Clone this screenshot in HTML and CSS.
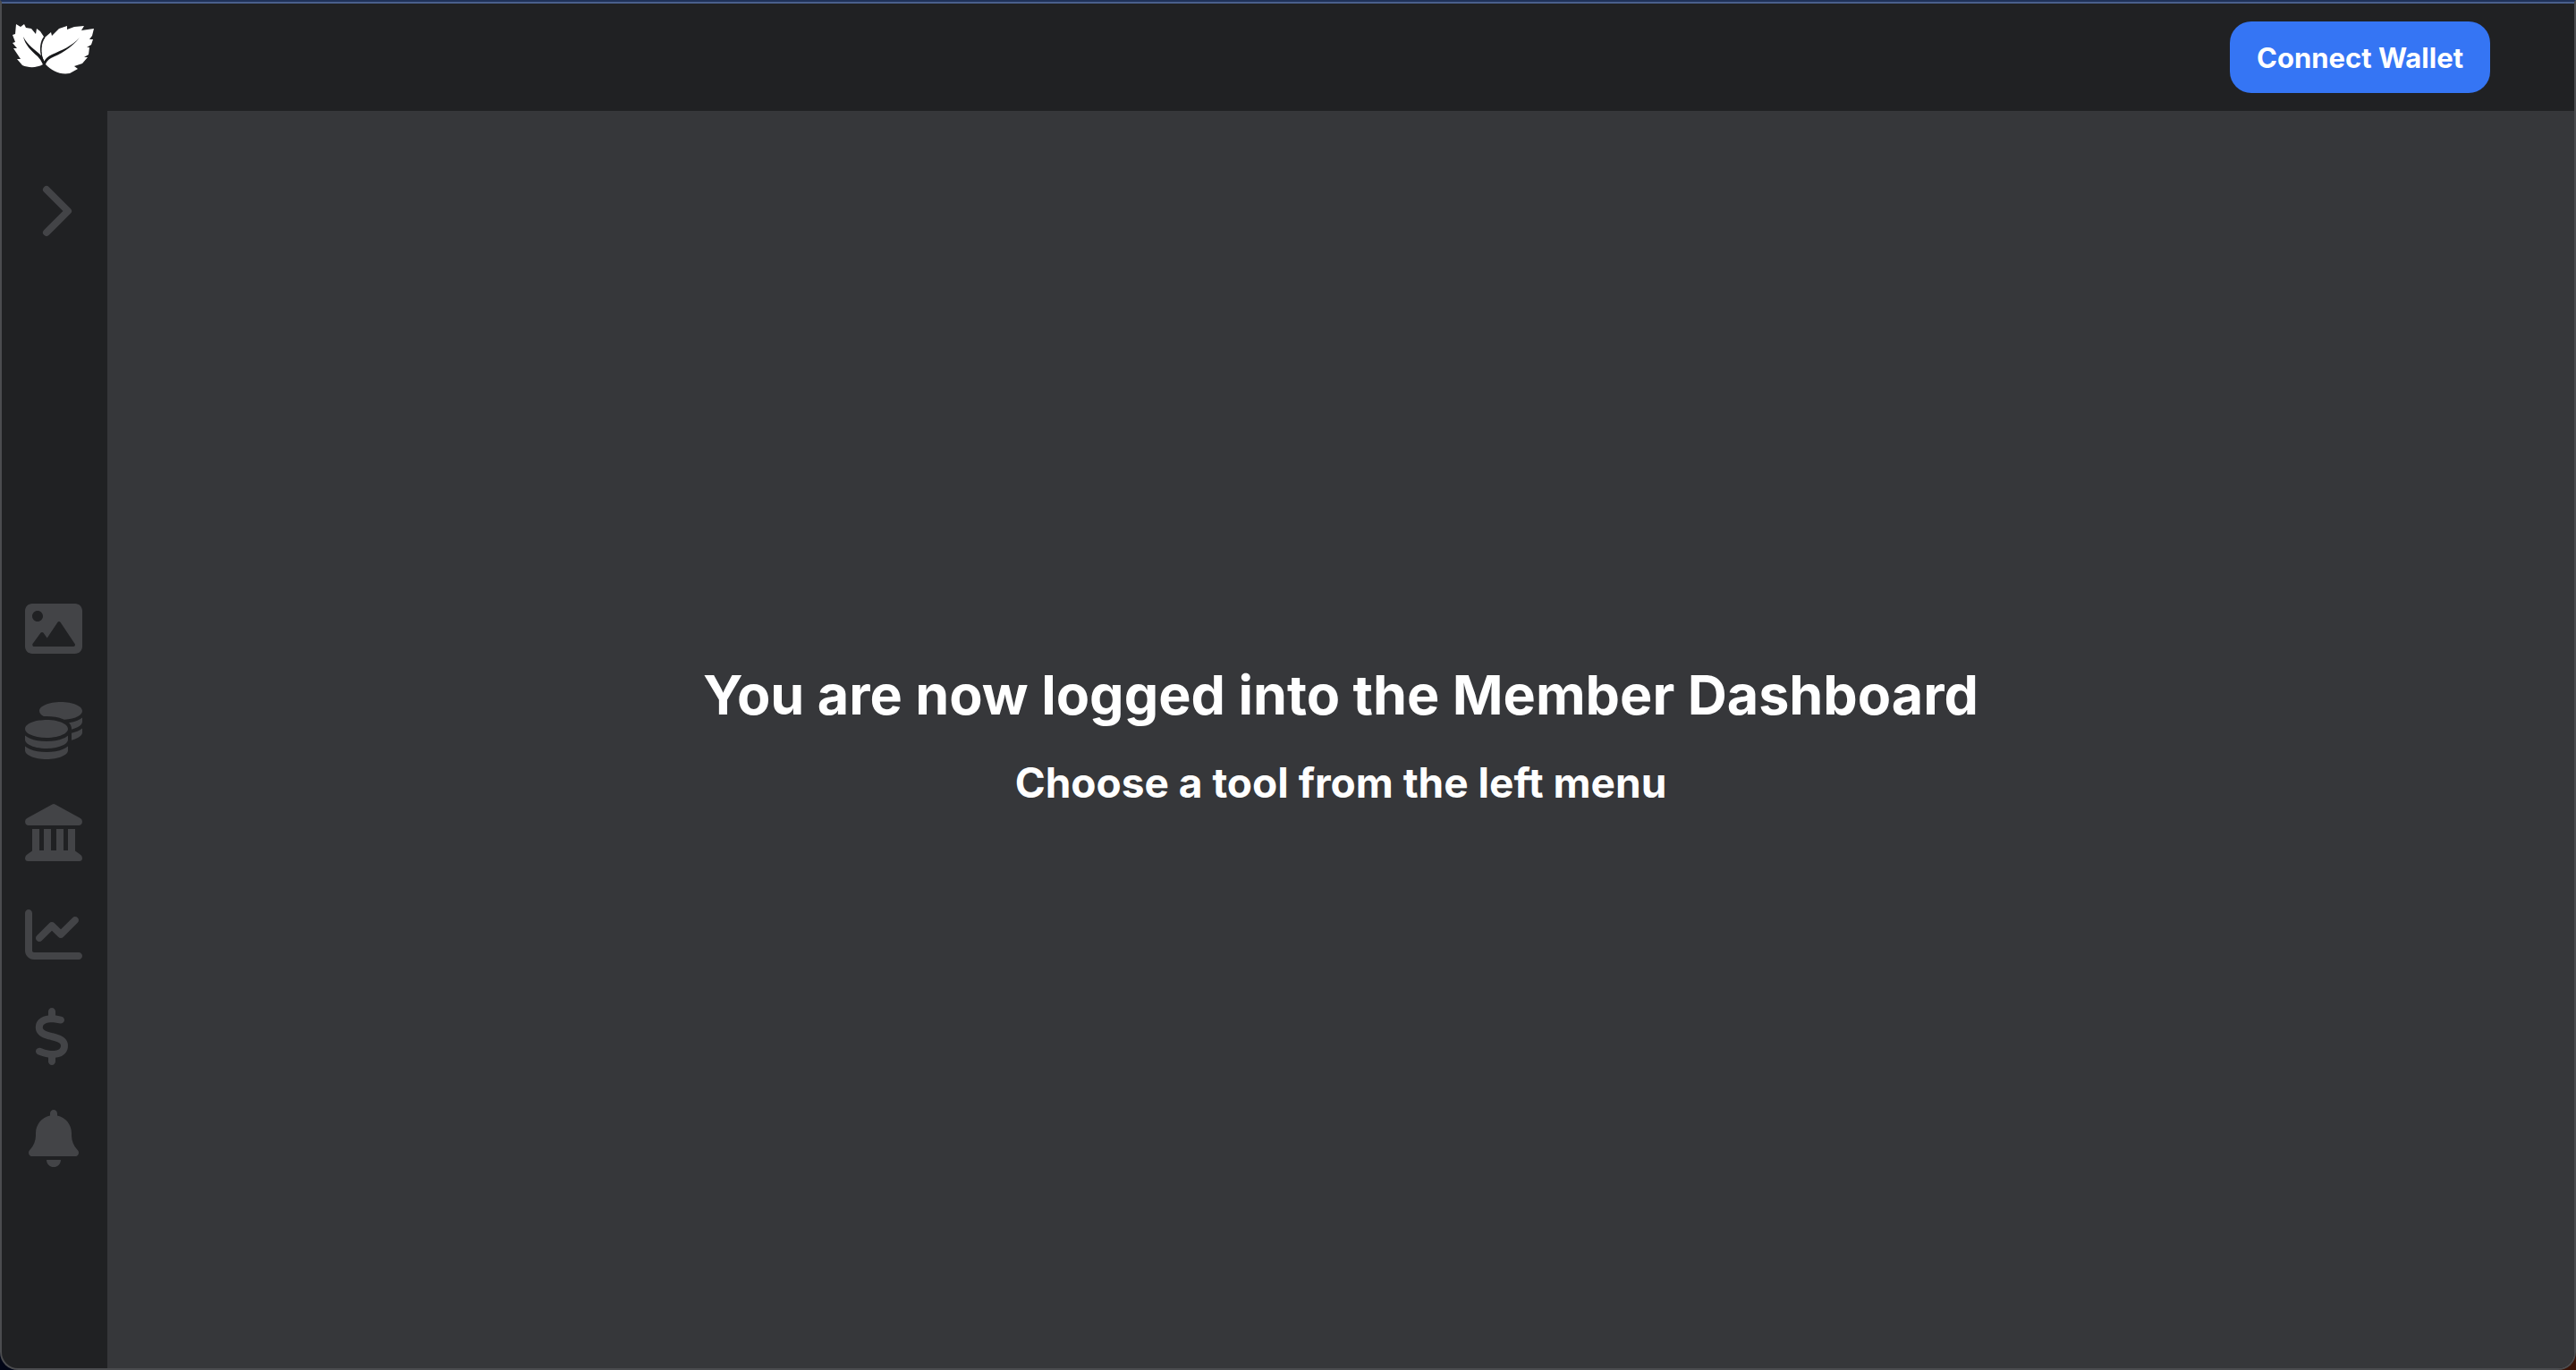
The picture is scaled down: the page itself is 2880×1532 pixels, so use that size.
FILE: index.html
```html
<!DOCTYPE html>
<html lang="en">
<head>
<meta charset="utf-8">
<meta name="viewport" content="width=device-width, initial-scale=1">
<title>Member Dashboard</title>
<link rel="stylesheet" href="styles.css">
</head>
<body>
<div class="window">
  <header class="topbar">
    <a class="logo" href="#" aria-label="Home">
      <svg viewBox="10 24 100 64" aria-hidden="true">
        <path class="leaf" d="M18 27L23 30 27 27 29 31 35 32 40 38 41 32 45 35 49 41C45 46 44 54 46 62L48 72C41 76 32 76 25 73L19 66 23 66 15 54 19 54 14 48 17 47 14 39 17 38Z"/>
        <path class="leaf" d="M49 68C45 60 45 49 50 42L57 36 58 40 66 32 75 29 75 33 83 30 94 29 91 34 105 32 103 40 100 44 104 44 102 50 97 53 100 53 99 61 94 64 98 64 92 71 83 74 87 77 78 82C67 84 58 79 51 72Z"/>
        <path class="vein" d="M26 41C31 51 39 55 46 62Q49 66 50 71L48 72Q46 67 42 63C35 57 28 50 26 41ZM89 42C80 54 66 61 57 65Q52 68 51 72L48 71Q51 64 58 61C69 56 80 52 89 42Z"/>
        <path class="seam" d="M50 42C45 49 45 58 48 68"/>
      </svg>
    </a>
    <button class="connect" type="button">Connect Wallet</button>
  </header>
  <div class="body">
    <nav class="sidebar" aria-label="Tools">
      <button class="toggle" type="button" aria-label="Expand menu">
        <svg viewBox="0 0 64 64" aria-hidden="true"><path d="M24 8L48 32L24 56"/></svg>
      </button>
      <div class="tools">
        <a href="#" aria-label="Gallery"><svg viewBox="0 0 512 512" aria-hidden="true"><path d="M448 32h-384C28.600 32 0 60.650 0 96v320c0 35.350 28.650 64 64 64h384c35.350 0 64-28.650 64-64V96C512 60.650 483.300 32 448 32zM112 96c26.510 0 48 21.490 48 48S138.500 192 112 192s-48-21.490-48-48S85.480 96 112 96zM446.100 407.600C443.300 412.800 437.900 416 432 416H82c-6.020 0-11.530-3.380-14.260-8.750c-2.730-5.370-2.210-11.810 1.330-16.680l70-96C142.100 290.400 146.900 288 152 288s9.920 2.440 12.930 6.570l32.460 44.510l93.300-139.100C293.700 194.700 298.700 192 304 192s10.350 2.670 13.310 7.120l128 192C448.600 396 448.900 402.300 446.100 407.600z"/></svg></a>
        <a href="#" aria-label="Tokens"><svg viewBox="0 0 512 512" aria-hidden="true"><path d="M512 80c0 18-14.300 34.600-38.400 48c-29.100 16.100-72.500 27.500-122.300 30.900c-3.700-1.800-7.400-3.500-11.300-5C300.600 137.400 248.200 128 192 128c-8.300 0-16.400 .2-24.500 .6l-1.100-.6C142.300 114.600 128 98 128 80c0-44.200 86-80 192-80S512 35.800 512 80zM160.700 161.100c10.200-.7 20.700-1.100 31.300-1.100c62.200 0 117.400 12.300 152.500 31.400C369.300 204.900 384 221.700 384 240c0 4-.7 7.900-2.100 11.700c-4.600 13.200-17 25.300-35 35.500c-.1 .1-.3 .1-.4 .2c-.3 .2-.6 .3-.9 .5c-35 19.400-90.800 32-153.600 32c-59.600 0-112.900-11.300-148.200-29.100c-1.900-.9-3.700-1.900-5.500-2.900C14.300 274.600 0 258 0 240c0-34.800 53.400-64.500 128-75.400c10.500-1.500 21.400-2.700 32.700-3.500zM416 240c0-21.900-10.600-39.900-24.100-53.400c28.300-4.400 54.200-11.400 76.200-20.500c16.300-6.800 31.500-15.200 43.900-25.500V176c0 19.300-16.500 37.100-43.800 50.900c-14.600 7.400-32.400 13.700-52.400 18.500c.1-1.800 .2-3.500 .2-5.300zm-32 96c0 18-14.300 34.600-38.400 48c-1.800 1-3.600 1.900-5.500 2.900C304.900 404.700 251.600 416 192 416c-62.800 0-118.600-12.600-153.600-32C14.300 370.600 0 354 0 336V300.600c12.500 10.300 27.600 18.700 43.900 25.500C83.400 342.600 135.800 352 192 352s108.600-9.400 148.100-25.900c7.800-3.200 15.300-6.900 22.400-10.900c6.100-3.400 11.800-7.200 17.200-11.200c1.500-1.100 2.900-2.300 4.300-3.400V336zm32 0V278.100c19-4.200 36.500-9.500 52.100-16c16.300-6.800 31.500-15.200 43.900-25.500V272c0 10.500-5 21-14.900 30.900c-16.300 16.300-45 29.700-81.300 38.400c.1-1.700 .2-3.500 .2-5.300zM192 448c56.200 0 108.600-9.400 148.100-25.900c16.300-6.800 31.500-15.200 43.900-25.500V432c0 44.200-86 80-192 80S0 476.200 0 432V396.600c12.500 10.300 27.600 18.700 43.900 25.500C83.400 438.600 135.800 448 192 448z"/></svg></a>
        <a href="#" aria-label="Bank"><svg viewBox="0 0 512 512" aria-hidden="true"><path d="M243 3Q256-3 269 3L495 128Q514 139 511 162Q508 192 480 192H32Q4 192 1 162Q-2 139 17 128ZM64 224h64v192h40V224h64v192h48V224h64v192h40V224h64v196l40 27q24 14 24 37 0 28-28 28H28q-28 0-28-28 0-23 24-37l40-27z"/></svg></a>
        <a href="#" aria-label="Charts"><svg viewBox="0 0 512 512" aria-hidden="true"><path d="M64 64c0-17.700-14.300-32-32-32S0 46.300 0 64V400c0 44.200 35.800 80 80 80H480c17.700 0 32-14.300 32-32s-14.300-32-32-32H80c-8.800 0-16-7.200-16-16V64zm406.600 86.600c12.500-12.500 12.500-32.800 0-45.300s-32.800-12.500-45.300 0L320 210.700l-57.400-57.400c-12.500-12.500-32.800-12.500-45.300 0l-112 112c-12.500 12.500-12.500 32.800 0 45.300s32.800 12.500 45.300 0L240 221.300l57.400 57.400c12.500 12.500 32.800 12.500 45.300 0l128-128z"/></svg></a>
        <a href="#" aria-label="Payments"><svg viewBox="-80 0 512 512" aria-hidden="true"><path d="M160 0c17.700 0 32 14.300 32 32V67.700c1.600 .2 3.100 .4 4.700 .7c.4 .1 .7 .1 1.100 .2l48 8.800c17.400 3.200 28.900 19.900 25.700 37.200s-19.900 28.900-37.200 25.700l-47.500-8.700c-31.300-4.600-58.900-1.500-78.300 6.200s-27.200 18.300-29 28.100c-2 10.700-.5 16.700 1.200 20.400c1.800 3.900 5.500 8.300 12.800 13.200c16.300 10.700 41.300 17.700 73.700 26.300l2.900 .8c28.600 7.600 63.600 16.800 89.600 33.800c14.200 9.300 27.600 21.900 35.900 39.500c8.500 17.900 10.300 37.900 6.400 59.200c-6.900 38-33.100 63.400-65.600 76.700c-13.700 5.600-28.600 9.200-44.400 11V480c0 17.700-14.300 32-32 32s-32-14.300-32-32V445.100c-.4-.1-.9-.1-1.300-.2l-.2 0c-24.400-3.800-64.500-14.300-91.500-26.300c-16.100-7.200-23.400-26.100-16.200-42.200s26.100-23.400 42.200-16.200c20.900 9.300 55.300 18.500 75.200 21.600c31.900 4.700 58.200 2 76-5.300c16.900-6.900 24.600-16.900 26.800-28.900c1.900-10.600 .4-16.700-1.300-20.400c-1.900-4-5.600-8.400-13-13.300c-16.400-10.700-41.500-17.700-74-26.300l-2.800-.7C119.400 279.300 84.400 270 58.400 253c-14.200-9.300-27.500-22-35.800-39.600c-8.400-17.900-10.100-37.900-6.100-59.200C23.700 116 52.300 91.200 84.800 78.300c13.300-5.300 27.900-8.900 43.200-11V32c0-17.700 14.300-32 32-32z"/></svg></a>
        <a href="#" aria-label="Alerts"><svg viewBox="-32 0 512 512" aria-hidden="true"><path d="M256 32V51.200C329 66.030 384 130.600 384 208V226.800C384 273.900 401.300 319.200 432.500 354.400L439.900 362.700C448.300 372.200 450.400 385.600 445.200 397.100C440 408.600 428.600 416 416 416H32C19.400 416 7.970 408.600 2.800 397.100C-2.350 385.600-.29 372.200 8.080 362.700L15.500 354.400C46.740 319.200 64 273.900 64 226.800V208C64 130.600 118.100 66.030 192 51.200V32C192 14.330 206.300 0 224 0C241.700 0 256 14.330 256 32zM224 512C207 512 190.700 505.300 178.700 493.300C166.700 481.300 160 464.100 160 448H288C288 464.100 281.300 481.300 269.300 493.300C257.300 505.300 240.100 512 224 512z"/></svg></a>
      </div>
    </nav>
    <main class="content">
      <h1>You are now logged into the Member Dashboard</h1>
      <h2>Choose a tool from the left menu</h2>
    </main>
  </div>
</div>
</body>
</html>
```
FILE: styles.css
```css
* {
  box-sizing: border-box;
}

body {
  margin: 0;
  background: linear-gradient(90deg, #020617 50%, #3a1408 50%);
  font-family: Inter, "Liberation Sans", sans-serif;
  color: #fff;
}

.window {
  display: flex;
  flex-direction: column;
  min-height: 100vh;
  overflow: hidden;
  background: #202123;
  border: 2px solid #4b4c4f;
  border-top-color: #1f3157;
  border-radius: 0 0 20px 20px;
}

.topbar {
  display: flex;
  justify-content: space-between;
  align-items: flex-start;
  height: 122px;
  padding: 20px 94px 0 8px;
  border-top: 2px solid #4a5f8c;
}

.logo {
  display: block;
  width: 100px;
  height: 64px;
}

.logo svg {
  display: block;
  width: 100%;
  height: 100%;
  overflow: visible;
}

.leaf {
  fill: #fff;
}

.vein {
  fill: #18191b;
}

.seam {
  fill: none;
  stroke: #18191b;
  stroke-width: 1;
}

.connect {
  height: 80px;
  padding: 2px 30px 0;
  border: 0;
  border-radius: 24px;
  background: #3575f4;
  color: #fff;
  font: 700 31px/40px Inter, "Liberation Sans", sans-serif;
}

.body {
  display: flex;
  flex: 1;
}

.sidebar {
  display: flex;
  flex-direction: column;
  align-items: center;
  flex: 0 0 118px;
  padding: 80px 2px 0 0;
  color: #434447;
}

.toggle {
  display: block;
  padding: 0;
  border: 0;
  background: none;
  color: inherit;
}

.toggle svg {
  display: block;
  width: 64px;
  height: 64px;
  fill: none;
  stroke: currentColor;
  stroke-width: 8;
  stroke-linecap: round;
  stroke-linejoin: round;
}

.tools {
  display: flex;
  flex-direction: column;
  gap: 50px;
  margin-top: 403px;
}

.tools a {
  display: block;
  color: inherit;
}

.tools svg {
  display: block;
  width: 64px;
  height: 64px;
  fill: currentColor;
}

.content {
  display: flex;
  flex: 1;
  flex-direction: column;
  align-items: center;
  justify-content: center;
  gap: 28px;
  padding-bottom: 12px;
  background: #36373a;
}

h1,
h2 {
  margin: 0;
  font-weight: 700;
  text-align: center;
}

h1 {
  font-size: 61px;
  line-height: 80px;
}

h2 {
  font-size: 46px;
  line-height: 60px;
}
```
